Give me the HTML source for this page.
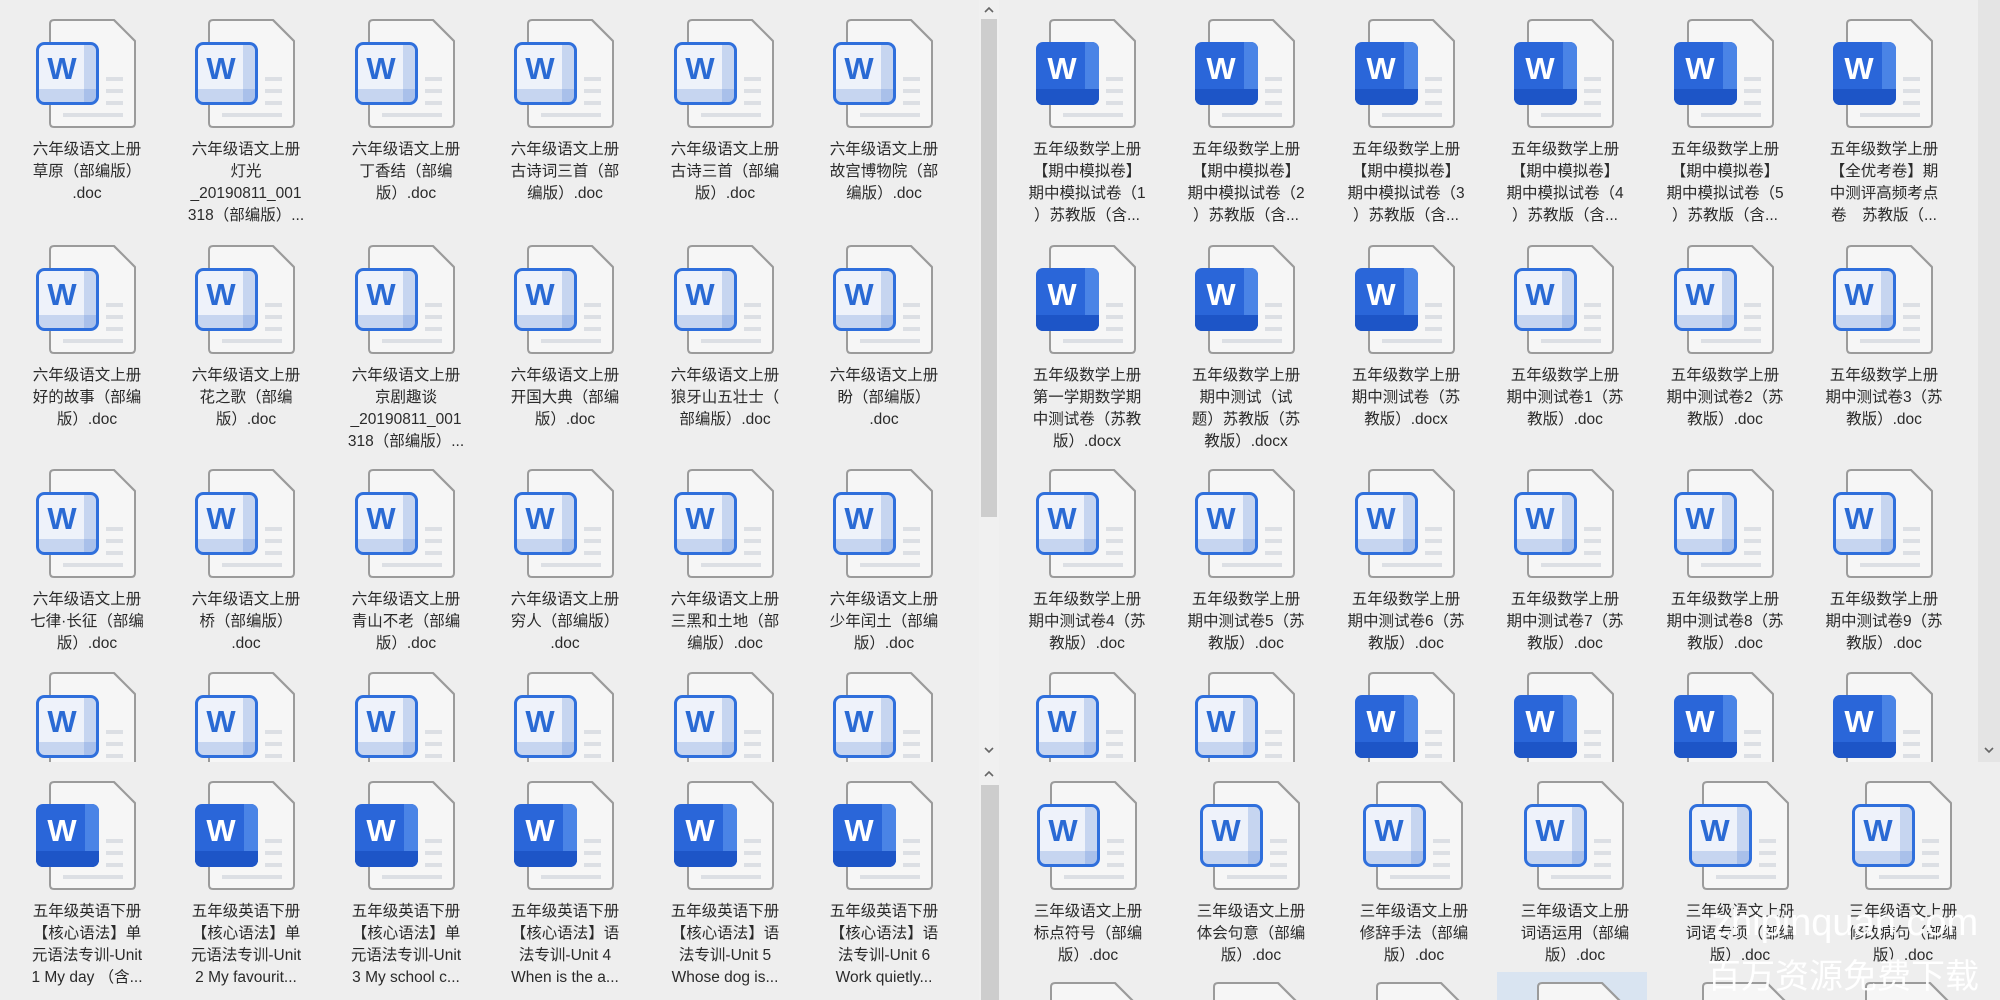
<!DOCTYPE html>
<html style="width:2000px;height:1000px;overflow:hidden"><head><meta charset="utf-8"><style>
*{margin:0;padding:0;box-sizing:border-box}
body{width:2000px;height:1000px;background:#eeeeee;position:relative;overflow:hidden;font-family:"Liberation Sans","Noto Sans CJK SC",sans-serif}
.p{position:absolute;overflow:hidden;background:#eeeeee}
.it{position:absolute;width:160px;height:210px}
.it svg{position:absolute;left:33px;top:0}
.t{position:absolute;left:0;top:120px;width:160px;padding-left:8px;text-align:center;font-size:15.5px;line-height:22px;color:#2a2a2a;white-space:nowrap}
.pg{fill:#f6f6f6;stroke:#9b9b9b;stroke-width:2}
.ln{stroke:#dcdfe4;stroke-width:4}
.w{font:bold 31px "Liberation Sans",sans-serif;text-anchor:middle}
.sb{position:absolute;background:#f0f0f0}
.th{position:absolute;background:#cdcdcd}
.wm{position:absolute;color:rgba(255,255,255,0.95);white-space:nowrap}
</style></head><body>
<svg width="0" height="0" style="position:absolute">
<defs>
<symbol id="L" viewBox="0 0 100 110"><path class="pg" d="M18 1H78L99 22V104Q99 108 95 108H18Q14 108 14 104V5Q14 1 18 1Z"/><path d="M78 1L99 22" stroke="#9b9b9b" stroke-width="2"/><path class="ln" d="M70 60h17M70 72h17M70 84h17M27 96h60"/><rect x="1.5" y="24.5" width="60" height="60" rx="7" fill="#eef2fa"/><path d="M48 26h12v57h-12zM3 70h45v13h-45z" fill="#c6d5f0"/><rect x="48" y="70" width="12" height="13" fill="#a9c0ea"/><rect x="1.5" y="24.5" width="60" height="60" rx="7" fill="none" stroke="#2f6fdc" stroke-width="3"/></symbol>
<symbol id="D" viewBox="0 0 100 110"><path class="pg" d="M18 1H78L99 22V104Q99 108 95 108H18Q14 108 14 104V5Q14 1 18 1Z"/><path d="M78 1L99 22" stroke="#9b9b9b" stroke-width="2"/><path class="ln" d="M70 60h17M70 72h17M70 84h17M27 96h60"/><rect x="0" y="23" width="63" height="63" rx="7" fill="#2a66d9"/><rect x="49" y="23" width="14" height="63" rx="7" fill="#4a84e6"/><rect x="49" y="23" width="7" height="63" fill="#4a84e6"/><rect x="0" y="70" width="63" height="16" rx="7" fill="#1d55c7"/><rect x="0" y="70" width="63" height="8" fill="#1d55c7"/></symbol>
</defs></svg>

<!-- TOP LEFT -->
<div class="p" style="left:0;top:0;width:978px;height:762px">
<div class="it" style="left:3px;top:19px"><svg width="100" height="110"><use href="#L"/><text x="26" y="60" class="w" fill="#2a6ad4">W</text></svg><div class="t">六年级语文上册<br>草原（部编版）<br>.doc</div></div>
<div class="it" style="left:162px;top:19px"><svg width="100" height="110"><use href="#L"/><text x="26" y="60" class="w" fill="#2a6ad4">W</text></svg><div class="t">六年级语文上册<br>灯光<br>_20190811_001<br>318（部编版）...</div></div>
<div class="it" style="left:322px;top:19px"><svg width="100" height="110"><use href="#L"/><text x="26" y="60" class="w" fill="#2a6ad4">W</text></svg><div class="t">六年级语文上册<br>丁香结（部编<br>版）.doc</div></div>
<div class="it" style="left:481px;top:19px"><svg width="100" height="110"><use href="#L"/><text x="26" y="60" class="w" fill="#2a6ad4">W</text></svg><div class="t">六年级语文上册<br>古诗词三首（部<br>编版）.doc</div></div>
<div class="it" style="left:641px;top:19px"><svg width="100" height="110"><use href="#L"/><text x="26" y="60" class="w" fill="#2a6ad4">W</text></svg><div class="t">六年级语文上册<br>古诗三首（部编<br>版）.doc</div></div>
<div class="it" style="left:800px;top:19px"><svg width="100" height="110"><use href="#L"/><text x="26" y="60" class="w" fill="#2a6ad4">W</text></svg><div class="t">六年级语文上册<br>故宫博物院（部<br>编版）.doc</div></div>

<div class="it" style="left:3px;top:245px"><svg width="100" height="110"><use href="#L"/><text x="26" y="60" class="w" fill="#2a6ad4">W</text></svg><div class="t">六年级语文上册<br>好的故事（部编<br>版）.doc</div></div>
<div class="it" style="left:162px;top:245px"><svg width="100" height="110"><use href="#L"/><text x="26" y="60" class="w" fill="#2a6ad4">W</text></svg><div class="t">六年级语文上册<br>花之歌（部编<br>版）.doc</div></div>
<div class="it" style="left:322px;top:245px"><svg width="100" height="110"><use href="#L"/><text x="26" y="60" class="w" fill="#2a6ad4">W</text></svg><div class="t">六年级语文上册<br>京剧趣谈<br>_20190811_001<br>318（部编版）...</div></div>
<div class="it" style="left:481px;top:245px"><svg width="100" height="110"><use href="#L"/><text x="26" y="60" class="w" fill="#2a6ad4">W</text></svg><div class="t">六年级语文上册<br>开国大典（部编<br>版）.doc</div></div>
<div class="it" style="left:641px;top:245px"><svg width="100" height="110"><use href="#L"/><text x="26" y="60" class="w" fill="#2a6ad4">W</text></svg><div class="t">六年级语文上册<br>狼牙山五壮士（<br>部编版）.doc</div></div>
<div class="it" style="left:800px;top:245px"><svg width="100" height="110"><use href="#L"/><text x="26" y="60" class="w" fill="#2a6ad4">W</text></svg><div class="t">六年级语文上册<br>盼（部编版）<br>.doc</div></div>

<div class="it" style="left:3px;top:469px"><svg width="100" height="110"><use href="#L"/><text x="26" y="60" class="w" fill="#2a6ad4">W</text></svg><div class="t">六年级语文上册<br>七律·长征（部编<br>版）.doc</div></div>
<div class="it" style="left:162px;top:469px"><svg width="100" height="110"><use href="#L"/><text x="26" y="60" class="w" fill="#2a6ad4">W</text></svg><div class="t">六年级语文上册<br>桥（部编版）<br>.doc</div></div>
<div class="it" style="left:322px;top:469px"><svg width="100" height="110"><use href="#L"/><text x="26" y="60" class="w" fill="#2a6ad4">W</text></svg><div class="t">六年级语文上册<br>青山不老（部编<br>版）.doc</div></div>
<div class="it" style="left:481px;top:469px"><svg width="100" height="110"><use href="#L"/><text x="26" y="60" class="w" fill="#2a6ad4">W</text></svg><div class="t">六年级语文上册<br>穷人（部编版）<br>.doc</div></div>
<div class="it" style="left:641px;top:469px"><svg width="100" height="110"><use href="#L"/><text x="26" y="60" class="w" fill="#2a6ad4">W</text></svg><div class="t">六年级语文上册<br>三黑和土地（部<br>编版）.doc</div></div>
<div class="it" style="left:800px;top:469px"><svg width="100" height="110"><use href="#L"/><text x="26" y="60" class="w" fill="#2a6ad4">W</text></svg><div class="t">六年级语文上册<br>少年闰土（部编<br>版）.doc</div></div>

<div class="it" style="left:3px;top:672px"><svg width="100" height="110"><use href="#L"/><text x="26" y="60" class="w" fill="#2a6ad4">W</text></svg></div>
<div class="it" style="left:162px;top:672px"><svg width="100" height="110"><use href="#L"/><text x="26" y="60" class="w" fill="#2a6ad4">W</text></svg></div>
<div class="it" style="left:322px;top:672px"><svg width="100" height="110"><use href="#L"/><text x="26" y="60" class="w" fill="#2a6ad4">W</text></svg></div>
<div class="it" style="left:481px;top:672px"><svg width="100" height="110"><use href="#L"/><text x="26" y="60" class="w" fill="#2a6ad4">W</text></svg></div>
<div class="it" style="left:641px;top:672px"><svg width="100" height="110"><use href="#L"/><text x="26" y="60" class="w" fill="#2a6ad4">W</text></svg></div>
<div class="it" style="left:800px;top:672px"><svg width="100" height="110"><use href="#L"/><text x="26" y="60" class="w" fill="#2a6ad4">W</text></svg></div>
</div>

<!-- TOP RIGHT -->
<div class="p" style="left:1000px;top:0;width:978px;height:762px">
<div class="it" style="left:3px;top:19px"><svg width="100" height="110"><use href="#D"/><text x="26" y="60" class="w" fill="#fff">W</text></svg><div class="t">五年级数学上册<br>【期中模拟卷】<br>期中模拟试卷（1<br>）苏教版（含...</div></div>
<div class="it" style="left:162px;top:19px"><svg width="100" height="110"><use href="#D"/><text x="26" y="60" class="w" fill="#fff">W</text></svg><div class="t">五年级数学上册<br>【期中模拟卷】<br>期中模拟试卷（2<br>）苏教版（含...</div></div>
<div class="it" style="left:322px;top:19px"><svg width="100" height="110"><use href="#D"/><text x="26" y="60" class="w" fill="#fff">W</text></svg><div class="t">五年级数学上册<br>【期中模拟卷】<br>期中模拟试卷（3<br>）苏教版（含...</div></div>
<div class="it" style="left:481px;top:19px"><svg width="100" height="110"><use href="#D"/><text x="26" y="60" class="w" fill="#fff">W</text></svg><div class="t">五年级数学上册<br>【期中模拟卷】<br>期中模拟试卷（4<br>）苏教版（含...</div></div>
<div class="it" style="left:641px;top:19px"><svg width="100" height="110"><use href="#D"/><text x="26" y="60" class="w" fill="#fff">W</text></svg><div class="t">五年级数学上册<br>【期中模拟卷】<br>期中模拟试卷（5<br>）苏教版（含...</div></div>
<div class="it" style="left:800px;top:19px"><svg width="100" height="110"><use href="#D"/><text x="26" y="60" class="w" fill="#fff">W</text></svg><div class="t">五年级数学上册<br>【全优考卷】期<br>中测评高频考点<br>卷　苏教版（...</div></div>

<div class="it" style="left:3px;top:245px"><svg width="100" height="110"><use href="#D"/><text x="26" y="60" class="w" fill="#fff">W</text></svg><div class="t">五年级数学上册<br>第一学期数学期<br>中测试卷（苏教<br>版）.docx</div></div>
<div class="it" style="left:162px;top:245px"><svg width="100" height="110"><use href="#D"/><text x="26" y="60" class="w" fill="#fff">W</text></svg><div class="t">五年级数学上册<br>期中测试（试<br>题）苏教版（苏<br>教版）.docx</div></div>
<div class="it" style="left:322px;top:245px"><svg width="100" height="110"><use href="#D"/><text x="26" y="60" class="w" fill="#fff">W</text></svg><div class="t">五年级数学上册<br>期中测试卷（苏<br>教版）.docx</div></div>
<div class="it" style="left:481px;top:245px"><svg width="100" height="110"><use href="#L"/><text x="26" y="60" class="w" fill="#2a6ad4">W</text></svg><div class="t">五年级数学上册<br>期中测试卷1（苏<br>教版）.doc</div></div>
<div class="it" style="left:641px;top:245px"><svg width="100" height="110"><use href="#L"/><text x="26" y="60" class="w" fill="#2a6ad4">W</text></svg><div class="t">五年级数学上册<br>期中测试卷2（苏<br>教版）.doc</div></div>
<div class="it" style="left:800px;top:245px"><svg width="100" height="110"><use href="#L"/><text x="26" y="60" class="w" fill="#2a6ad4">W</text></svg><div class="t">五年级数学上册<br>期中测试卷3（苏<br>教版）.doc</div></div>

<div class="it" style="left:3px;top:469px"><svg width="100" height="110"><use href="#L"/><text x="26" y="60" class="w" fill="#2a6ad4">W</text></svg><div class="t">五年级数学上册<br>期中测试卷4（苏<br>教版）.doc</div></div>
<div class="it" style="left:162px;top:469px"><svg width="100" height="110"><use href="#L"/><text x="26" y="60" class="w" fill="#2a6ad4">W</text></svg><div class="t">五年级数学上册<br>期中测试卷5（苏<br>教版）.doc</div></div>
<div class="it" style="left:322px;top:469px"><svg width="100" height="110"><use href="#L"/><text x="26" y="60" class="w" fill="#2a6ad4">W</text></svg><div class="t">五年级数学上册<br>期中测试卷6（苏<br>教版）.doc</div></div>
<div class="it" style="left:481px;top:469px"><svg width="100" height="110"><use href="#L"/><text x="26" y="60" class="w" fill="#2a6ad4">W</text></svg><div class="t">五年级数学上册<br>期中测试卷7（苏<br>教版）.doc</div></div>
<div class="it" style="left:641px;top:469px"><svg width="100" height="110"><use href="#L"/><text x="26" y="60" class="w" fill="#2a6ad4">W</text></svg><div class="t">五年级数学上册<br>期中测试卷8（苏<br>教版）.doc</div></div>
<div class="it" style="left:800px;top:469px"><svg width="100" height="110"><use href="#L"/><text x="26" y="60" class="w" fill="#2a6ad4">W</text></svg><div class="t">五年级数学上册<br>期中测试卷9（苏<br>教版）.doc</div></div>

<div class="it" style="left:3px;top:672px"><svg width="100" height="110"><use href="#L"/><text x="26" y="60" class="w" fill="#2a6ad4">W</text></svg></div>
<div class="it" style="left:162px;top:672px"><svg width="100" height="110"><use href="#L"/><text x="26" y="60" class="w" fill="#2a6ad4">W</text></svg></div>
<div class="it" style="left:322px;top:672px"><svg width="100" height="110"><use href="#D"/><text x="26" y="60" class="w" fill="#fff">W</text></svg></div>
<div class="it" style="left:481px;top:672px"><svg width="100" height="110"><use href="#D"/><text x="26" y="60" class="w" fill="#fff">W</text></svg></div>
<div class="it" style="left:641px;top:672px"><svg width="100" height="110"><use href="#D"/><text x="26" y="60" class="w" fill="#fff">W</text></svg></div>
<div class="it" style="left:800px;top:672px"><svg width="100" height="110"><use href="#D"/><text x="26" y="60" class="w" fill="#fff">W</text></svg></div>
</div>

<!-- BOTTOM LEFT -->
<div class="p" style="left:0;top:762px;width:978px;height:238px">
<div class="it" style="left:3px;top:19px"><svg width="100" height="110"><use href="#D"/><text x="26" y="60" class="w" fill="#fff">W</text></svg><div class="t">五年级英语下册<br>【核心语法】单<br>元语法专训-Unit<br>1 My day （含...</div></div>
<div class="it" style="left:162px;top:19px"><svg width="100" height="110"><use href="#D"/><text x="26" y="60" class="w" fill="#fff">W</text></svg><div class="t">五年级英语下册<br>【核心语法】单<br>元语法专训-Unit<br>2 My favourit...</div></div>
<div class="it" style="left:322px;top:19px"><svg width="100" height="110"><use href="#D"/><text x="26" y="60" class="w" fill="#fff">W</text></svg><div class="t">五年级英语下册<br>【核心语法】单<br>元语法专训-Unit<br>3 My school c...</div></div>
<div class="it" style="left:481px;top:19px"><svg width="100" height="110"><use href="#D"/><text x="26" y="60" class="w" fill="#fff">W</text></svg><div class="t">五年级英语下册<br>【核心语法】语<br>法专训-Unit 4<br>When is the a...</div></div>
<div class="it" style="left:641px;top:19px"><svg width="100" height="110"><use href="#D"/><text x="26" y="60" class="w" fill="#fff">W</text></svg><div class="t">五年级英语下册<br>【核心语法】语<br>法专训-Unit 5<br>Whose dog is...</div></div>
<div class="it" style="left:800px;top:19px"><svg width="100" height="110"><use href="#D"/><text x="26" y="60" class="w" fill="#fff">W</text></svg><div class="t">五年级英语下册<br>【核心语法】语<br>法专训-Unit 6<br>Work quietly...</div></div>
</div>

<!-- BOTTOM RIGHT -->
<div class="p" style="left:1000px;top:762px;width:1000px;height:238px">
<div style="position:absolute;left:497px;top:210px;width:150px;height:30px;background:#d9e4f1"></div>
<div class="it" style="left:4px;top:19px"><svg width="100" height="110"><use href="#L"/><text x="26" y="60" class="w" fill="#2a6ad4">W</text></svg><div class="t">三年级语文上册<br>标点符号（部编<br>版）.doc</div></div>
<div class="it" style="left:167px;top:19px"><svg width="100" height="110"><use href="#L"/><text x="26" y="60" class="w" fill="#2a6ad4">W</text></svg><div class="t">三年级语文上册<br>体会句意（部编<br>版）.doc</div></div>
<div class="it" style="left:330px;top:19px"><svg width="100" height="110"><use href="#L"/><text x="26" y="60" class="w" fill="#2a6ad4">W</text></svg><div class="t">三年级语文上册<br>修辞手法（部编<br>版）.doc</div></div>
<div class="it" style="left:491px;top:19px"><svg width="100" height="110"><use href="#L"/><text x="26" y="60" class="w" fill="#2a6ad4">W</text></svg><div class="t">三年级语文上册<br>词语运用（部编<br>版）.doc</div></div>
<div class="it" style="left:656px;top:19px"><svg width="100" height="110"><use href="#L"/><text x="26" y="60" class="w" fill="#2a6ad4">W</text></svg><div class="t">三年级语文上册<br>词语专项（部编<br>版）.doc</div></div>
<div class="it" style="left:819px;top:19px"><svg width="100" height="110"><use href="#L"/><text x="26" y="60" class="w" fill="#2a6ad4">W</text></svg><div class="t">三年级语文上册<br>修改病句（部编<br>版）.doc</div></div>
<div class="it" style="left:4px;top:220px"><svg width="100" height="110"><use href="#L"/></svg></div>
<div class="it" style="left:167px;top:220px"><svg width="100" height="110"><use href="#L"/></svg></div>
<div class="it" style="left:330px;top:220px"><svg width="100" height="110"><use href="#L"/></svg></div>
<div class="it" style="left:491px;top:220px"><svg width="100" height="110"><use href="#L"/></svg></div>
<div class="it" style="left:656px;top:220px"><svg width="100" height="110"><use href="#L"/></svg></div>
<div class="it" style="left:819px;top:220px"><svg width="100" height="110"><use href="#L"/></svg></div>
<div class="wm" style="left:712px;top:138px;font-size:38px;line-height:46px">zhipinquan.com</div>
<div class="wm" style="left:707px;top:190px;font-size:34px;line-height:44px;font-family:'Noto Sans CJK SC',sans-serif">百万资源免费下载</div>
</div>

<!-- scrollbars -->
<div class="sb" style="left:979px;top:0;width:20px;height:762px"></div>
<div class="th" style="left:981px;top:19px;width:16px;height:498px"></div>
<svg style="position:absolute;left:981px;top:4px" width="16" height="12"><path d="M4 8l4-4 4 4" fill="none" stroke="#666" stroke-width="1.6"/></svg>
<svg style="position:absolute;left:981px;top:744px" width="16" height="12"><path d="M4 4l4 4 4-4" fill="none" stroke="#666" stroke-width="1.6"/></svg>
<div class="sb" style="left:979px;top:762px;width:20px;height:238px"></div>
<svg style="position:absolute;left:981px;top:768px" width="16" height="12"><path d="M4 8l4-4 4 4" fill="none" stroke="#666" stroke-width="1.6"/></svg>
<div class="th" style="left:981px;top:785px;width:18px;height:215px"></div>
<div class="sb" style="left:1978px;top:0;width:22px;height:762px;background:#e4e4e4"></div>
<svg style="position:absolute;left:1981px;top:744px" width="16" height="12"><path d="M4 4l4 4 4-4" fill="none" stroke="#666" stroke-width="1.6"/></svg>
</body></html>
